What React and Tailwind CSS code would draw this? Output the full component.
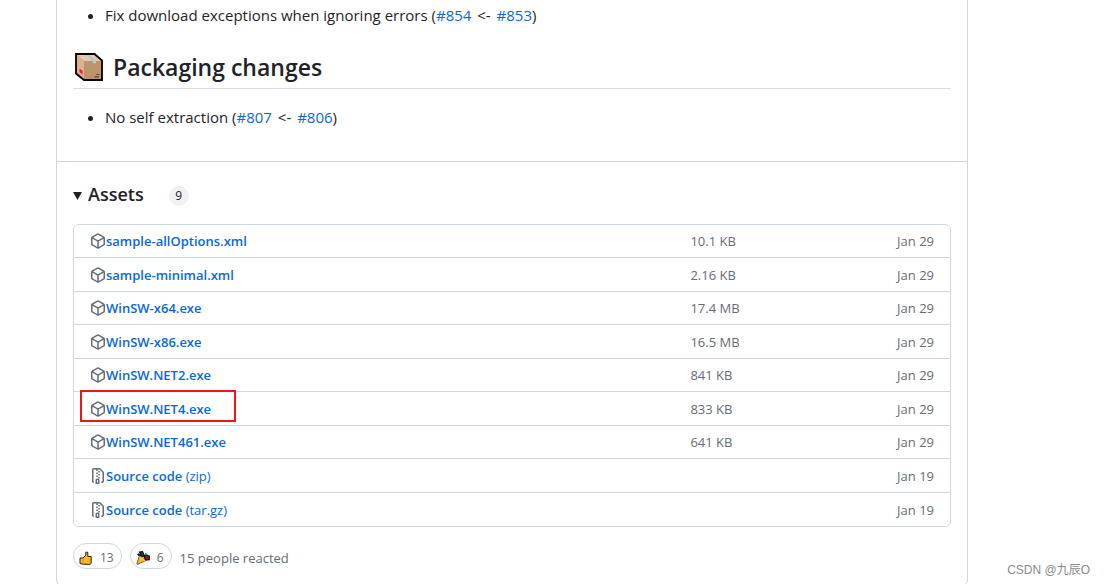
import React from 'react';

const assets = [
  { name: 'sample-allOptions.xml', size: '10.1 KB', date: 'Jan 29' },
  { name: 'sample-minimal.xml', size: '2.16 KB', date: 'Jan 29' },
  { name: 'WinSW-x64.exe', size: '17.4 MB', date: 'Jan 29' },
  { name: 'WinSW-x86.exe', size: '16.5 MB', date: 'Jan 29' },
  { name: 'WinSW.NET2.exe', size: '841 KB', date: 'Jan 29' },
  { name: 'WinSW.NET4.exe', size: '833 KB', date: 'Jan 29', marked: true },
  { name: 'WinSW.NET461.exe', size: '641 KB', date: 'Jan 29' },
  { name: 'Source code', kind: '(zip)', date: 'Jan 19' },
  { name: 'Source code', kind: '(tar.gz)', date: 'Jan 19' },
];

function PackageIcon() {
  return (
    <svg viewBox="0 0 16 16" className="size-4 shrink-0 fill-[#656d76]" aria-hidden="true">
      <path d="m8.878.392 5.25 3.045c.54.314.872.89.872 1.514v6.098a1.75 1.75 0 0 1-.872 1.514l-5.25 3.045a1.75 1.75 0 0 1-1.756 0l-5.25-3.045A1.75 1.75 0 0 1 1 11.049V4.951c0-.624.332-1.201.872-1.514L7.122.392a1.75 1.75 0 0 1 1.756 0ZM7.875 1.69l-4.63 2.685L8 7.133l4.755-2.758-4.63-2.685a.248.248 0 0 0-.25 0ZM2.5 5.677v5.372c0 .09.047.171.125.216l4.625 2.683V8.432Zm6.25 8.271 4.625-2.683a.25.25 0 0 0 .125-.216V5.677L8.75 8.432Z" />
    </svg>
  );
}

function ZipIcon() {
  return (
    <svg viewBox="0 0 16 16" className="size-4 shrink-0 fill-[#656d76]" aria-hidden="true">
      <path d="M3.5 1.75v11.5c0 .09.048.173.126.217a.75.75 0 0 1-.752 1.298A1.748 1.748 0 0 1 2 13.25V1.75C2 .784 2.784 0 3.75 0h5.586c.464 0 .909.185 1.237.513l2.914 2.914c.329.328.513.773.513 1.237v8.586A1.75 1.75 0 0 1 12.25 15h-.5a.75.75 0 0 1 0-1.5h.5a.25.25 0 0 0 .25-.25V4.664a.25.25 0 0 0-.073-.177L9.513 1.573a.25.25 0 0 0-.177-.073H7.25a.75.75 0 0 1 0 1.5h-.5a.75.75 0 0 1 0-1.5h-3a.25.25 0 0 0-.25.25Zm3.75 8.75h.5c.966 0 1.75.784 1.75 1.75v3a.75.75 0 0 1-.75.75h-2.5a.75.75 0 0 1-.75-.75v-3c0-.966.784-1.75 1.75-1.75ZM6 5.25a.75.75 0 0 1 .75-.75h.5a.75.75 0 0 1 0 1.5h-.5A.75.75 0 0 1 6 5.25Zm.75 2.25h.5a.75.75 0 0 1 0 1.5h-.5a.75.75 0 0 1 0-1.5ZM8 6.75A.75.75 0 0 1 8.75 6h.5a.75.75 0 0 1 0 1.5h-.5A.75.75 0 0 1 8 6.75ZM8.75 3h.5a.75.75 0 0 1 0 1.5h-.5a.75.75 0 0 1 0-1.5ZM8 9.75A.75.75 0 0 1 8.75 9h.5a.75.75 0 0 1 0 1.5h-.5A.75.75 0 0 1 8 9.75Zm-1 2.5v2.25h1v-2.25a.25.25 0 0 0-.25-.25h-.5a.25.25 0 0 0-.25.25Z" />
    </svg>
  );
}

function BoxEmoji() {
  return (
    <svg viewBox="0 0 28 28" className="size-7 shrink-0" aria-hidden="true">
      <path d="M1 1h18.500l7.500 6.500V27H9l-8-6.500Z" fill="#be946a" />
      <path d="M1 1h18.500l7.500 6.500V8H9Z" fill="#e8c8ad" />
      <path d="M1 1l8 7v19l-8-6.500Z" fill="#dcb092" />
      <path d="M9.500 1h4.500l7 7v2.500l-3.500-.500V8Z" fill="#b9c4cb" />
      <path d="M4.500 15.800l3 2v3.700l-3-2.200Z" fill="#f0183c" />
      <path d="M21.500 21.500h3M19.500 23.800h4.500" stroke="#5c4330" strokeWidth="1.200" />
      <path d="M1 1h18.500l7.500 6.500V27H9l-8-6.500Z" fill="none" stroke="#000" strokeWidth="1.800" />
    </svg>
  );
}

function ThumbEmoji() {
  return (
    <svg viewBox="0 0 14 14" className="size-3.5 shrink-0" aria-hidden="true">
      <path d="M1 7h3.200l2.600-3V1.200h2v4.300h3.400v6.800L11 13.300H4.500L1 12.500Z" fill="#fcb922" stroke="#30210c" strokeWidth="1" strokeLinejoin="round" />
      <path d="M4.300 7.200v5M9.500 7.800h2.500M9.500 10h2.500" stroke="#d88a10" strokeWidth=".7" />
    </svg>
  );
}

function PartyEmoji() {
  return (
    <svg viewBox="0 0 14 14" className="size-3.5 shrink-0" aria-hidden="true">
      <path d="M.800 3.600 3 2.200 5.800 5 4.200 6Z" fill="#111" />
      <path d="M3.500 1 6.500.600l2 4.200-2.600.700Z" fill="#164b68" stroke="#111" strokeWidth="1.200" />
      <path d="M8 5.500 10.500 4l3 1.200-.300 3.500-3.700.500Z" fill="#8e1c24" stroke="#111" strokeWidth="1.200" />
      <circle cx="9.800" cy="3" r="1" fill="#1588bd" />
      <path d="M3.500 4.500 9.700 9.700 1.500 13.300Q.600 13.400.900 12.500Z" fill="#fdb92a" stroke="#5b390a" strokeWidth=".8" />
      <path d="m3.900 5.200 5.500 4.400-.700 1L3.500 6.500Z" fill="#ffd65c" />
    </svg>
  );
}

function Issue({ id }) {
  return (
    <a href={'#issue-' + id} className="text-[#0969da]">
      #{id}
    </a>
  );
}

function Reaction({ label, count, children }) {
  return (
    <button type="button" aria-label={label} className="flex h-[26px] items-center gap-[7px] rounded-full border border-[#d0d7de] pt-1 pr-[7px] pb-px pl-[5px] text-xs text-[#656d76]">
      {children}
      <span className="leading-4">{count}</span>
    </button>
  );
}

export default function App() {
  return (
    <div className="relative min-h-screen bg-white font-['Open_Sans','Noto_Sans',sans-serif] text-[#1f2328]">
      <main className="mr-[136px] ml-14 rounded-b-md border-x border-b border-[#d0d7de]">
        <section className="px-4 pt-[3px] pb-8 text-[15px] leading-6">
          <ul className="list-disc pl-8">
            <li>
              Fix download exceptions when ignoring errors (<Issue id="854" /> <span className="px-0.5">&lt;-</span> <Issue id="853" />)
            </li>
          </ul>
          <h2 className="mt-[25px] mb-4 flex items-center gap-2.5 border-b border-[#d8dee4] pb-1.5 pl-0.5 text-[23px] leading-[30px] font-semibold">
            <BoxEmoji />
            Packaging changes
          </h2>
          <ul className="list-disc pl-8">
            <li>
              No self extraction (<Issue id="807" /> <span className="px-0.5">&lt;-</span> <Issue id="806" />)
            </li>
          </ul>
        </section>

        <section className="border-t border-[#d0d7de] px-4 pt-4 pb-4 text-[13px]">
          <details open>
            <summary className="mb-3.5 flex list-none items-center leading-8">
              <svg viewBox="0 0 9 8" className="mt-1 mr-1.5 h-2 w-[9px] fill-[#1f2328]" aria-hidden="true">
                <path d="M0 0h9L4.500 8Z" />
              </svg>
              <h3 className="text-lg leading-8 font-semibold">Assets</h3>
              <span className="mt-1 ml-[25px] flex size-5 items-center justify-center rounded-full bg-[#eff1f3] text-xs font-medium">9</span>
            </summary>
            <table className="w-full border-separate border-spacing-0 rounded-md border border-[#d0d7de] text-[#656d76]">
              <tbody>
                {assets.map((asset, i) => (
                  <tr key={i} className="group odd:h-[33px] even:h-[34px]">
                    <td className="relative w-[69%] border-[#d0d7de] p-0 pl-4 group-not-last:border-b">
                      <div className="flex items-center">
                        {asset.kind ? <ZipIcon /> : <PackageIcon />}
                        <a href="#download" className="leading-5 text-[#0969da]">
                          <span className="font-semibold">{asset.name}</span>
                          {asset.kind && ' ' + asset.kind}
                        </a>
                      </div>
                      {asset.marked && <span className="pointer-events-none absolute -top-0.5 left-1.5 h-8 w-[156px] border-2 border-[#f01414]" />}
                    </td>
                    <td className="border-[#d0d7de] p-0 pl-3 leading-5 group-not-last:border-b">{asset.size}</td>
                    <td className="border-[#d0d7de] p-0 pr-4 text-right leading-5 group-not-last:border-b">{asset.date}</td>
                  </tr>
                ))}
              </tbody>
            </table>
          </details>
          <div className="mt-4 flex items-center gap-2 text-[#656d76]">
            <Reaction label="Thumbs up, 13" count="13">
              <ThumbEmoji />
            </Reaction>
            <Reaction label="Hooray, 6" count="6">
              <PartyEmoji />
            </Reaction>
            <span className="pt-1 leading-5">15 people reacted</span>
          </div>
        </section>
      </main>
      <p className="absolute right-3.5 bottom-2 font-['Liberation_Sans','Noto_Sans_CJK_SC',sans-serif] text-xs leading-4 text-[#8b8b8b]">CSDN @九辰O</p>
    </div>
  );
}
